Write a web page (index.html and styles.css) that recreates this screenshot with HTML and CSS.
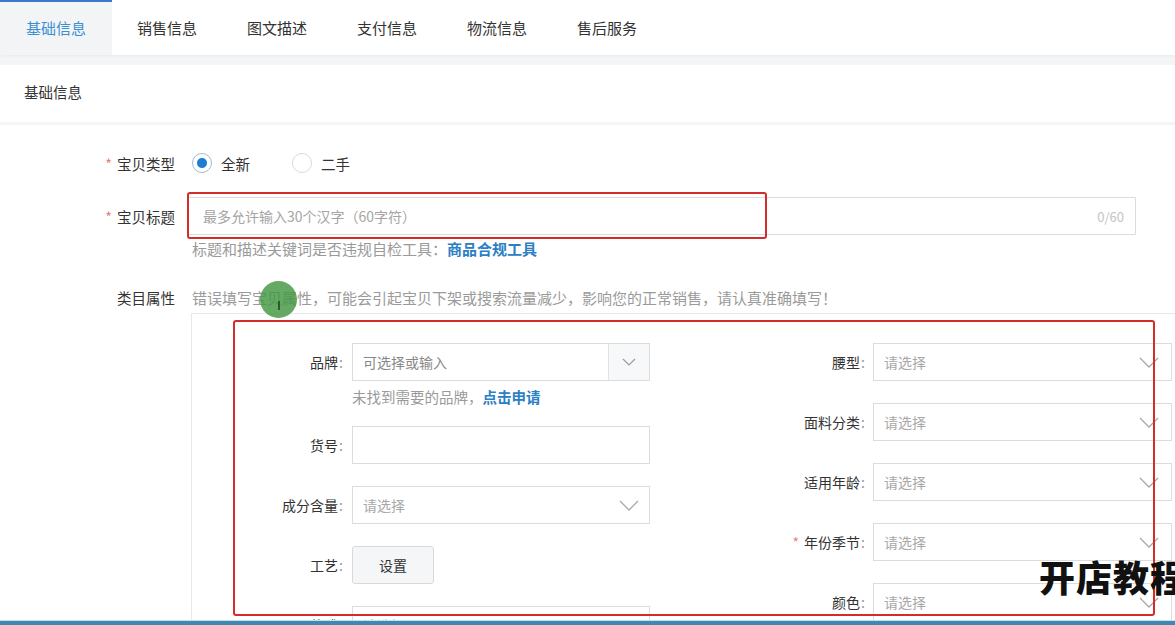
FILE: index.html
```html
<!DOCTYPE html>
<html lang="zh-CN">
<head>
    <meta charset="UTF-8">
    <meta name="viewport" content="width=device-width, initial-scale=1.0">
    <title>发布宝贝 - 基础信息</title>
    <link rel="stylesheet" href="styles.css">
</head>
<body>
<div class="page">

    <ul class="tabs">
        <li class="tab active">基础信息</li>
        <li class="tab">销售信息</li>
        <li class="tab">图文描述</li>
        <li class="tab">支付信息</li>
        <li class="tab">物流信息</li>
        <li class="tab">售后服务</li>
    </ul>

    <div class="panel-head">基础信息</div>

    <div class="form">
        <div class="row row-type">
            <span class="label required">宝贝类型</span>
            <div class="ctrl radios">
                <span class="radio checked"><i></i>全新</span>
                <span class="radio"><i></i>二手</span>
            </div>
        </div>

        <div class="row row-title">
            <span class="label required">宝贝标题</span>
            <div class="ctrl">
                <div class="title-input">
                    <span class="placeholder">最多允许输入30个汉字（60字符）</span>
                    <span class="counter">0/60</span>
                </div>
            </div>
        </div>
        <p class="hint title-hint">标题和描述关键词是否违规自检工具：<a href="#" class="link">商品合规工具</a></p>

        <div class="row row-attrs">
            <span class="label">类目属性</span>
            <div class="ctrl">
                <p class="hint attrs-hint">错误填写宝贝属性，可能会引起宝贝下架或搜索流量减少，影响您的正常销售，请认真准确填写！</p>
                <div class="attr-box">
                    <div class="attr-col col-left">
                        <div class="attr-row no-gap">
                            <span class="attr-label">品牌<em>:</em></span>
                            <div class="select combo">
                                <span>可选择或输入</span>
                                <span class="arrow-box">
                                    <svg width="14" height="8" viewBox="0 0 14 8"><polyline points="1,1 7,7 13,1" fill="none" stroke="#9a9a9a" stroke-width="1.2"/></svg>
                                </span>
                            </div>
                        </div>
                        <p class="attr-hint">未找到需要的品牌，<a href="#" class="link">点击申请</a></p>

                        <div class="attr-row">
                            <span class="attr-label">货号<em>:</em></span>
                            <div class="select"></div>
                        </div>
                        <div class="attr-row">
                            <span class="attr-label">成分含量<em>:</em></span>
                            <div class="select">
                                <span>请选择</span>
                                <svg class="chev" width="20" height="11" viewBox="0 0 20 11"><polyline points="1,1 10,10 19,1" fill="none" stroke="#a8a8a8" stroke-width="1.3"/></svg>
                            </div>
                        </div>
                        <div class="attr-row">
                            <span class="attr-label">工艺<em>:</em></span>
                            <button class="btn">设置</button>
                        </div>
                        <div class="attr-row">
                            <span class="attr-label">款式<em>:</em></span>
                            <div class="select">
                                <span>请选择</span>
                                <svg class="chev" width="20" height="11" viewBox="0 0 20 11"><polyline points="1,1 10,10 19,1" fill="none" stroke="#a8a8a8" stroke-width="1.3"/></svg>
                            </div>
                        </div>
                    </div>

                    <div class="attr-col col-right">
                        <div class="attr-row">
                            <span class="attr-label">腰型<em>:</em></span>
                            <div class="select">
                                <span>请选择</span>
                                <svg class="chev" width="20" height="11" viewBox="0 0 20 11"><polyline points="1,1 10,10 19,1" fill="none" stroke="#a8a8a8" stroke-width="1.3"/></svg>
                            </div>
                        </div>
                        <div class="attr-row">
                            <span class="attr-label">面料分类<em>:</em></span>
                            <div class="select">
                                <span>请选择</span>
                                <svg class="chev" width="20" height="11" viewBox="0 0 20 11"><polyline points="1,1 10,10 19,1" fill="none" stroke="#a8a8a8" stroke-width="1.3"/></svg>
                            </div>
                        </div>
                        <div class="attr-row">
                            <span class="attr-label">适用年龄<em>:</em></span>
                            <div class="select">
                                <span>请选择</span>
                                <svg class="chev" width="20" height="11" viewBox="0 0 20 11"><polyline points="1,1 10,10 19,1" fill="none" stroke="#a8a8a8" stroke-width="1.3"/></svg>
                            </div>
                        </div>
                        <div class="attr-row">
                            <span class="attr-label required">年份季节<em>:</em></span>
                            <div class="select">
                                <span>请选择</span>
                                <svg class="chev" width="20" height="11" viewBox="0 0 20 11"><polyline points="1,1 10,10 19,1" fill="none" stroke="#a8a8a8" stroke-width="1.3"/></svg>
                            </div>
                        </div>
                        <div class="attr-row">
                            <span class="attr-label">颜色<em>:</em></span>
                            <div class="select">
                                <span>请选择</span>
                                <svg class="chev" width="20" height="11" viewBox="0 0 20 11"><polyline points="1,1 10,10 19,1" fill="none" stroke="#a8a8a8" stroke-width="1.3"/></svg>
                            </div>
                        </div>
                    </div>
                </div>
            </div>
        </div>
    </div>

    <!-- 标注框和水印 -->
    <div class="mark mark-title"></div>
    <div class="mark mark-attrs"></div>
    <div class="cursor-dot"></div>
    <div class="watermark">开店教程</div>
    <div class="taskbar"></div>

</div>
</body>
</html>
```

FILE: styles.css
```css
* {
    margin: 0;
    padding: 0;
    box-sizing: border-box;
}

body {
    font-family: "Noto Sans CJK SC", "Liberation Sans", sans-serif;
    font-size: 14px;
    color: #333;
    background-color: #f4f5f7;
    overflow: hidden;
}

a {
    text-decoration: none;
}

.page {
    position: relative;
    width: 1175px;
    height: 625px;
    overflow: hidden;
}

/* 顶部标签 */
.tabs {
    display: flex;
    list-style: none;
    height: 55px;
    background-color: #fff;
    box-shadow: 0 1px 3px rgba(0, 0, 0, 0.05);
}

.tab {
    width: 110px;
    text-align: center;
    line-height: 55px;
    font-size: 15px;
    color: #333;
}

.tab.active {
    width: 112px;
    background-color: #f3f4f6;
    color: #3b8fd3;
    border-top: 2px solid #3a78c8;
    line-height: 51px;
}

.panel-head {
    margin-top: 10px;
    height: 57px;
    line-height: 54px;
    padding-left: 24px;
    font-size: 14.5px;
    background-color: #fff;
}

/* 表单 */
.form {
    margin-top: 3px;
    padding-top: 19px;
    height: 600px;
    background-color: #fff;
}

.row {
    display: flex;
    align-items: center;
}

.label {
    width: 175px;
    flex-shrink: 0;
    text-align: right;
    font-size: 14.5px;
    color: #333;
}

.required::before {
    content: "*";
    color: #ee8080;
    margin-right: 5px;
}

.ctrl {
    margin-left: 13px;
}

.row-type {
    height: 38px;
}

.radios {
    display: flex;
    align-items: center;
    padding-left: 4px;
}

.radio {
    display: inline-flex;
    align-items: center;
    margin-right: 42px;
    font-size: 14.5px;
}

.radio i {
    width: 20px;
    height: 20px;
    margin-right: 9px;
    border: 1px solid #d5dbe1;
    border-radius: 50%;
    background-color: #fff;
}

.radio.checked i {
    border-color: #9bbbd9;
    background: radial-gradient(circle, #1c7ed2 0 4.5px, #fff 5.5px);
}

.row-title {
    margin-top: 15px;
}

.title-input {
    display: flex;
    align-items: center;
    justify-content: space-between;
    width: 948px;
    height: 38px;
    padding: 0 11px 0 14px;
    border: 1px solid #dcdcdc;
}

.placeholder {
    color: #a5a5a5;
    font-size: 14px;
}

.counter {
    color: #c4c4c4;
    font-size: 13px;
}

.hint {
    color: #9a9a9a;
    font-size: 15px;
    line-height: 18px;
}

.title-hint {
    margin: 5px 0 0 192px;
}

.link {
    color: #2b80c5;
    font-weight: bold;
}

.row-attrs {
    align-items: flex-start;
    margin-top: 31px;
}

.row-attrs .label {
    line-height: 18px;
}

.attrs-hint {
    padding-left: 4px;
    white-space: nowrap;
}

/* 类目属性框 */
.attr-box {
    display: flex;
    width: 1040px;
    margin: 6px 0 0 3px;
    padding-top: 29px;
    border: 1px solid #e8e8e8;
    border-right: none;
}

.attr-col {
    display: flex;
    flex-direction: column;
}

.col-left {
    width: 458px;
}

.attr-row {
    display: flex;
    align-items: center;
    height: 38px;
    margin-bottom: 22px;
    flex-shrink: 0;
}

.attr-row.no-gap {
    margin-bottom: 0;
}

.attr-label {
    flex-shrink: 0;
    text-align: right;
    font-size: 14px;
    color: #333;
}

.attr-label em {
    font-style: normal;
    color: #999;
    margin-left: 1px;
}

.col-left .attr-label {
    width: 151px;
    margin-right: 9px;
}

.col-right .attr-label {
    width: 215px;
    margin-right: 8px;
}

.select {
    display: flex;
    align-items: center;
    justify-content: space-between;
    width: 298px;
    height: 38px;
    padding: 0 10px 0 10px;
    border: 1px solid #dcdcdc;
    background-color: #fff;
    color: #a8a8a8;
    font-size: 14px;
}

.col-right .select {
    width: 299px;
    padding-right: 12px;
}

.select.combo {
    padding-right: 0;
    color: #888;
}

.arrow-box {
    display: flex;
    align-items: center;
    justify-content: center;
    width: 41px;
    height: 100%;
    border-left: 1px solid #e2e2e2;
    background-color: #f7f8fa;
}

.attr-hint {
    margin: 0 0 19px 160px;
    padding-top: 6px;
    line-height: 20px;
    color: #9a9a9a;
    font-size: 14.5px;
}

.btn {
    width: 82px;
    height: 38px;
    border: 1px solid #d9d9d9;
    border-radius: 3px;
    background-color: #f5f6f8;
    font-family: inherit;
    font-size: 14px;
    color: #333;
}

/* 红色标注框 */
.mark {
    position: absolute;
    border: 2.5px solid #d42b2b;
    border-radius: 3px;
}

.mark-title {
    left: 187px;
    top: 192px;
    width: 580px;
    height: 47px;
}

.mark-attrs {
    left: 233px;
    top: 320px;
    width: 922px;
    height: 296px;
}

/* 鼠标位置提示 */
.cursor-dot {
    position: absolute;
    left: 260px;
    top: 281px;
    width: 37px;
    height: 37px;
    border-radius: 50%;
    background-color: rgba(66, 150, 66, 0.82);
}

.cursor-dot::after {
    content: "";
    position: absolute;
    left: 18px;
    top: 20px;
    width: 1.5px;
    height: 9px;
    background-color: #2d5a2d;
}

.watermark {
    position: absolute;
    left: 1039px;
    top: 555px;
    font-size: 36px;
    font-weight: 900;
    line-height: 1.2;
    letter-spacing: 1px;
    color: #111;
    white-space: nowrap;
}

.taskbar {
    position: absolute;
    left: 0;
    right: 0;
    bottom: 0;
    height: 5px;
    border-top: 1px solid #c4e0ee;
    background-color: #3f88b3;
}
```
